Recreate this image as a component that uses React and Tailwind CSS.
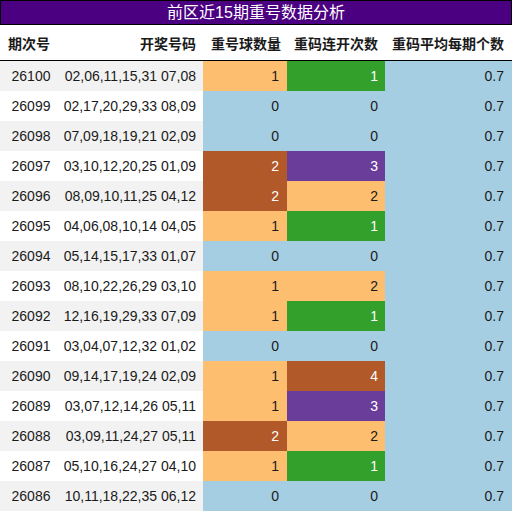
import React from 'react';

const rows = [
    ['26100', '02,06,11,15,31 07,08', 1, 1],
    ['26099', '02,17,20,29,33 08,09', 0, 0],
    ['26098', '07,09,18,19,21 02,09', 0, 0],
    ['26097', '03,10,12,20,25 01,09', 2, 3],
    ['26096', '08,09,10,11,25 04,12', 2, 2],
    ['26095', '04,06,08,10,14 04,05', 1, 1],
    ['26094', '05,14,15,17,33 01,07', 0, 0],
    ['26093', '08,10,22,26,29 03,10', 1, 2],
    ['26092', '12,16,19,29,33 07,09', 1, 1],
    ['26091', '03,04,07,12,32 01,02', 0, 0],
    ['26090', '09,14,17,19,24 02,09', 1, 4],
    ['26089', '03,07,12,14,26 05,11', 1, 3],
    ['26088', '03,09,11,24,27 05,11', 2, 2],
    ['26087', '05,10,16,24,27 04,10', 1, 1],
    ['26086', '10,11,18,22,35 06,12', 0, 0],
];

// colour per value (ColorBrewer paired)
const repeatColor = {
    0: 'bg-[#a6cee3] text-[#1a1a1a]',
    1: 'bg-[#fdbf6f] text-[#1a1a1a]',
    2: 'bg-[#b15928] text-white',
};

const streakColor = {
    0: 'bg-[#a6cee3] text-[#1a1a1a]',
    1: 'bg-[#33a02c] text-white',
    2: 'bg-[#fdbf6f] text-[#1a1a1a]',
    3: 'bg-[#6a3d9a] text-white',
    4: 'bg-[#b15928] text-white',
};

const font = { fontFamily: '"Liberation Sans", "Noto Sans CJK SC", sans-serif' };

const App = () => {
    return (
        <div className="w-[512px] h-[513px] bg-white overflow-hidden text-[14px] text-[#1a1a1a]" style={font}>
            {/* Title */}
            <div className="h-[25px] border border-black bg-[#4b0082] text-white text-[16px] leading-[23px] text-center">
                前区近15期重号数据分析
            </div>

            {/* Header */}
            <div className="grid grid-cols-[61px_142px_84px_98px_127px] h-[36px] border-b border-black font-bold items-center pt-[4px]">
                <div className="pl-2">期次号</div>
                <div className="text-right pr-[7px]">开奖号码</div>
                <div className="text-right pr-[6px]">重号球数量</div>
                <div className="text-right pr-[7px]">重码连开次数</div>
                <div className="text-right pr-[8px]">重码平均每期个数</div>
            </div>

            {/* Rows */}
            <div className="flex flex-col">
                {rows.map(([issue, nums, rep, streak], i) => (
                    <div
                        key={issue}
                        className="grid grid-cols-[61px_142px_84px_98px_127px] h-[30px] leading-[30px]"
                    >
                        <div className={'text-center pl-[1px] ' + (i % 2 === 0 ? 'bg-[#f2f2f2]' : 'bg-white')}>{issue}</div>
                        <div className={'text-right pr-[7px] ' + (i % 2 === 0 ? 'bg-[#f2f2f2]' : 'bg-white')}>{nums}</div>
                        <div className={'text-right pr-2 ' + repeatColor[rep]}>{rep}</div>
                        <div className={'text-right pr-[7px] ' + streakColor[streak]}>{streak}</div>
                        <div className="text-right pr-2 bg-[#a6cee3] text-[#1a1a1a]">0.7</div>
                    </div>
                ))}
            </div>
        </div>
    );
};

export default App;
